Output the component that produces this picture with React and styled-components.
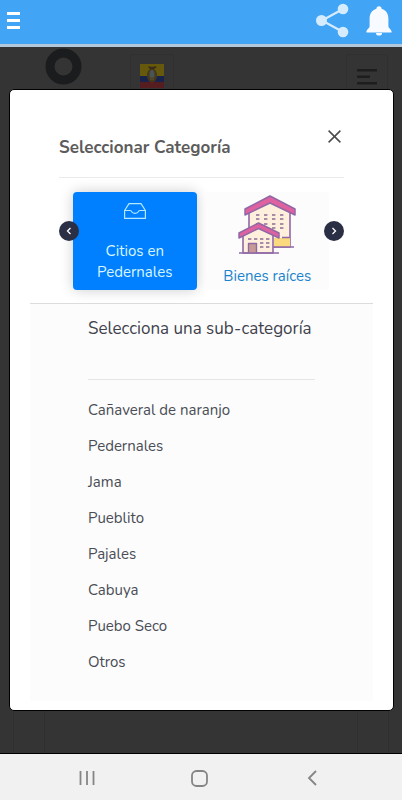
import React, { useState } from "react";
import styled, { createGlobalStyle } from "styled-components";

const GlobalStyle = createGlobalStyle`
  * { box-sizing: border-box; }
  body { margin: 0; background: #343434; }
  body, button { font-family: Nunito, "Open Sans", sans-serif; }
  button { padding: 0; border: 0; background: none; color: inherit; cursor: pointer; }
  svg { display: block; }
`;

const Shell = styled.div`
  display: grid;
  grid-template-rows: auto 1fr auto;
  min-height: 100vh;
`;

const AppBar = styled.header`
  display: flex;
  align-items: center;
  justify-content: space-between;
  height: 47px;
  padding: 0 10px 2px 7px;
  background: #42a4f5;
  border-bottom: 3px solid #b3c9db;
`;

const BarActions = styled.div`
  display: flex;
  align-items: center;
  gap: 16px;
`;

const Stage = styled.main`
  display: grid;
`;

const Page = styled.div`
  grid-area: 1 / 1;
  display: flex;
  flex-direction: column;
  padding: 0 13px;
  background: #343434;
`;

const PageHeader = styled.div`
  display: flex;
  align-items: flex-start;
  padding: 1px 1px 0 32px;
`;

const FlagButton = styled.button`
  margin: 6px auto 0 48px;
  padding: 9px;
  border: 1px solid #303030;
  border-radius: 3px;
`;

const MenuButton = styled.button`
  margin-top: 6px;
  padding: 14px 10px;
  border: 1px solid #303030;
  border-radius: 3px;
`;

const PageCard = styled.div`
  flex: 1;
  padding: 0 30px;
  border: solid #2f2f2f;
  border-width: 0 1px;
`;

const PageCardBody = styled.div`
  height: 100%;
  border: solid #2f2f2f;
  border-width: 0 1px;
`;

const Overlay = styled.div`
  grid-area: 1 / 1;
  z-index: 1;
  padding: 42px 8px 42px 9px;
`;

const Dialog = styled.section`
  padding: 36px 20px 9px 20px;
  background: #fff;
  border: 1px solid #000;
  border-radius: 5px;
`;

const DialogHeader = styled.header`
  display: flex;
  align-items: flex-start;
  justify-content: space-between;
  height: 52px;
  margin: 0 29px;
  border-bottom: 1px solid #ebebeb;
`;

const DialogTitle = styled.h1`
  margin: 10px 0 0;
  font-size: 17px;
  line-height: 24px;
  font-weight: 700;
  color: #5c5c5c;
  white-space: nowrap;
`;

const CloseButton = styled.button`
  margin: 4px 3px 0 0;
`;

const Carousel = styled.div`
  display: flex;
  align-items: center;
  margin: 0 29px;
  padding: 14px 0 13px;
`;

const ArrowButton = styled.button`
  display: grid;
  place-items: center;
  flex: none;
  z-index: 1;
  width: 20px;
  height: 20px;
  margin: ${(p) => (p.$side === "left" ? "0 -6px 20px 0" : "0 0 20px -5px")};
  border-radius: 50%;
  background: #2b2f45;
  color: #fff;
`;

const Slides = styled.div`
  display: grid;
  grid-template-columns: 1fr 1fr;
  gap: 9px;
  flex: 1;
`;

const CategoryCard = styled.button`
  display: flex;
  flex-direction: column;
  align-items: center;
  justify-content: space-between;
  height: 98px;
  padding: ${(p) => (p.$active ? "11px 8px 7px" : "3px 8px")};
  border-radius: 4px;
  background: ${(p) => (p.$active ? "#0080ff" : "#fcfcfc")};
  color: ${(p) => (p.$active ? "#d9f6ff" : "#1b83cc")};
  box-shadow: ${(p) => (p.$active ? "0 0 14px rgba(0, 0, 0, 0.2)" : "none")};
  font-size: 15px;
  line-height: 21px;
`;

const Panel = styled.div`
  padding: 13px 58px 21px;
  background: #fcfcfc;
  border-top: 1px solid #dcdcdc;
`;

const PanelTitle = styled.h2`
  height: 63px;
  margin: 0 0 12px;
  border-bottom: 1px solid #e6e6e6;
  font-size: 17px;
  line-height: 24px;
  font-weight: 400;
  color: #3f424d;
  white-space: nowrap;
`;

const SubcategoryList = styled.ul`
  margin: 0;
  padding: 0;
  list-style: none;
`;

const SubcategoryButton = styled.button`
  display: block;
  width: 100%;
  text-align: left;
  font-size: 15px;
  line-height: 36px;
  color: #4a4d55;
`;

const SystemBar = styled.nav`
  display: grid;
  grid-template-columns: repeat(3, 1fr);
  align-items: center;
  justify-items: center;
  height: 48px;
  padding: 1px 34px 0 31px;
  background: #f1f1f1;
  border-top: 1px solid #000;
`;

const HamburgerIcon = () => (
  <svg width="13" height="18" viewBox="0 0 13 18" fill="#fff">
    <rect width="13" height="3" />
    <rect y="7" width="13" height="3" />
    <rect y="14" width="13" height="3" />
  </svg>
);

const ShareIcon = () => (
  <svg width="34" height="36" viewBox="0 0 34 36" fill="#d5ecff">
    <path d="M27 6 6 17.500l21 11.500" fill="none" stroke="#d5ecff" strokeWidth="2.200" />
    <circle cx="27" cy="6" r="5.300" />
    <circle cx="5.500" cy="17.500" r="5.500" />
    <circle cx="27" cy="29" r="5.300" />
  </svg>
);

const BellIcon = () => (
  <svg width="26" height="30" viewBox="0 0 26 30" fill="#f7faff">
    <circle cx="13" cy="2.800" r="2.600" />
    <path d="M13 2.500c5.800 0 9.400 4.300 9.400 10v7.500c0 2.300 2.300 2.600 3.200 5.600v.8H.4v-.8c.9-3 3.200-3.300 3.200-5.600v-7.500c0-5.700 3.600-10 9.400-10Z" />
    <path d="M10 27h6a3 2.600 0 0 1-6 0Z" />
  </svg>
);

const RingLogo = () => (
  <svg width="37" height="37" viewBox="0 0 37 37">
    <circle cx="18.500" cy="18.500" r="13.500" fill="none" stroke="#1b1c1d" strokeWidth="9" />
  </svg>
);

const FlagIcon = () => (
  <svg width="24" height="24" viewBox="0 0 24 24">
    <path fill="#66590c" d="M0 0h24v12H0z" />
    <path fill="#18234c" d="M0 12h24v6H0z" />
    <path fill="#561d20" d="M0 18h24v6H0z" />
    <path d="M8 3c2-1 3 0 4 0s2-1 5 0l-3 2h-4Z" fill="#382b19" />
    <ellipse cx="12" cy="11.500" rx="5" ry="7" fill="#47371d" />
    <ellipse cx="12" cy="11" rx="2.500" ry="5" fill="#485553" />
    <path d="M10 13h4v3h-4z" fill="#4d482c" />
  </svg>
);

const AlignLeftIcon = () => (
  <svg width="20" height="16" viewBox="0 0 20 16" fill="#1d1d1d">
    <path d="M0 0h20v2.400H0zM0 6.500h13v2.400H0zM0 13h20v2.400H0z" />
  </svg>
);

const CloseIcon = () => (
  <svg width="13" height="13" viewBox="0 0 13 13">
    <path d="m.6.600 11.800 11.800M12.400.6.600 12.400" stroke="#4a4a4a" strokeWidth="1.500" />
  </svg>
);

const ChevronIcon = ({ left }) => (
  <svg width="6" height="8" viewBox="0 0 6 8">
    <path d={left ? "M4.500 1 1.500 4l3 3" : "m1.500 1 3 3-3 3"} fill="none" stroke="#fff" strokeWidth="1.300" />
  </svg>
);

const InboxIcon = () => (
  <svg width="22" height="16" viewBox="0 0 22 16" fill="none" stroke="#b5e8ff" strokeWidth="1.200" strokeLinejoin="round">
    <path d="M.6 7.500 5 .6h12l4.400 6.900v7.900H.6Z" />
    <path d="M.6 7.500h5.600c1 0 1.300.6 1.600 1.400.4 1 1.300 1.400 3.200 1.400s2.800-.4 3.200-1.400c.3-.8.600-1.400 1.600-1.400h5.600" />
  </svg>
);

const windows = (xs, ys) => xs.flatMap((x) => ys.map((y) => `M${x} ${y}h3.400`)).join("");

const HousesIcon = () => (
  <svg width="58" height="60" viewBox="0 0 58 60" strokeLinejoin="round">
    <path d="M11 15 32 5l20 10v37H11Z" fill="#fff0dd" stroke="#9068a6" strokeWidth="1.600" />
    <path d="M36 43h16v9H36Z" fill="#fbd97f" />
    <path d="M44 42.500h8M36 52h20" stroke="#9068a6" strokeWidth="1.600" fill="none" />
    <path d={windows([18, 26, 34, 42], [20, 24, 29, 33])} stroke="#8d6b94" strokeWidth="1.600" />
    <path d="M32 1 57 14v6L32 8 7 20v-6Z" fill="#e0619f" stroke="#9068a6" strokeWidth="1.500" />
    <path d="M5 39 20 31l15 8v19H5Z" fill="#fff0dd" stroke="#9068a6" strokeWidth="1.600" />
    <path d="M20.500 28 41 38v5L20.500 33.500 1 43v-5Z" fill="#e0619f" stroke="#9068a6" strokeWidth="1.500" />
    <path d="M10.500 58V48.500h8V58" fill="#c79a96" stroke="#9068a6" strokeWidth="1.400" />
    <path d={windows([10, 16, 22, 28], [44])} stroke="#8d6b94" strokeWidth="1.500" />
    <path d={windows([22, 28], [48, 52])} stroke="#8d6b94" strokeWidth="1.500" />
    <path d="M1 58h40" stroke="#9068a6" strokeWidth="1.600" />
  </svg>
);

const RecentsIcon = () => (
  <svg width="16" height="16" viewBox="0 0 16 16">
    <path d="M1.500 1v14M8 1v14M14.500 1v14" stroke="#858585" strokeWidth="1.800" />
  </svg>
);

const HomeIcon = () => (
  <svg width="17" height="17" viewBox="0 0 17 17">
    <rect x="1" y="1" width="15" height="15" rx="4.500" fill="none" stroke="#858585" strokeWidth="1.800" />
  </svg>
);

const BackIcon = () => (
  <svg width="10" height="16" viewBox="0 0 10 16">
    <path d="M9 1 2 8l7 7" fill="none" stroke="#858585" strokeWidth="1.800" />
  </svg>
);

const categories = [
  { name: "Citios en Pedernales", icon: <InboxIcon /> },
  { name: "Bienes raíces", icon: <HousesIcon /> },
];

const subcategories = [
  "Cañaveral de naranjo",
  "Pedernales",
  "Jama",
  "Pueblito",
  "Pajales",
  "Cabuya",
  "Puebo Seco",
  "Otros",
];

export default function App() {
  const [active, setActive] = useState(0);

  return (
    <>
      <GlobalStyle />
      <Shell>
        <AppBar>
          <button aria-label="Menú"><HamburgerIcon /></button>
          <BarActions>
            <button aria-label="Compartir"><ShareIcon /></button>
            <button aria-label="Notificaciones"><BellIcon /></button>
          </BarActions>
        </AppBar>
        <Stage>
          <Page>
            <PageHeader>
              <RingLogo />
              <FlagButton aria-label="Ecuador"><FlagIcon /></FlagButton>
              <MenuButton aria-label="Navegación"><AlignLeftIcon /></MenuButton>
            </PageHeader>
            <PageCard><PageCardBody /></PageCard>
          </Page>
          <Overlay>
            <Dialog role="dialog" aria-labelledby="dialog-title">
              <DialogHeader>
                <DialogTitle id="dialog-title">Seleccionar Categoría</DialogTitle>
                <CloseButton aria-label="Cerrar"><CloseIcon /></CloseButton>
              </DialogHeader>
              <Carousel>
                <ArrowButton $side="left" aria-label="Anterior" onClick={() => setActive(0)}>
                  <ChevronIcon left />
                </ArrowButton>
                <Slides>
                  {categories.map((category, index) => (
                    <CategoryCard
                      key={category.name}
                      $active={index === active}
                      onClick={() => setActive(index)}
                    >
                      {category.icon}
                      <span>{category.name}</span>
                    </CategoryCard>
                  ))}
                </Slides>
                <ArrowButton $side="right" aria-label="Siguiente" onClick={() => setActive(1)}>
                  <ChevronIcon />
                </ArrowButton>
              </Carousel>
              <Panel>
                <PanelTitle>Selecciona una sub-categoría</PanelTitle>
                <SubcategoryList>
                  {subcategories.map((name) => (
                    <li key={name}><SubcategoryButton>{name}</SubcategoryButton></li>
                  ))}
                </SubcategoryList>
              </Panel>
            </Dialog>
          </Overlay>
        </Stage>
        <SystemBar>
          <button aria-label="Recientes"><RecentsIcon /></button>
          <button aria-label="Inicio"><HomeIcon /></button>
          <button aria-label="Atrás"><BackIcon /></button>
        </SystemBar>
      </Shell>
    </>
  );
}
